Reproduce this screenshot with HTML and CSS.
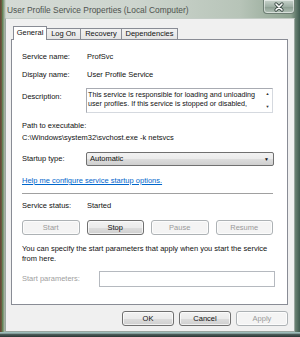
FILE: index.html
```html
<!DOCTYPE html>
<html>

<head>
    <meta name="viewport" content="width=device-width, initial-scale=1">
    <link rel="stylesheet" href="styles.css">
</head>

<body>
    <div class="window">
        <div class="titlebar">
            <span class="title">User Profile Service Properties (Local Computer)</span>
            <div class="close">
                <svg width="30" height="14" viewBox="0 0 30 14">
                    <path d="M12 4 L18 10 M18 4 L12 10" stroke="#3a4a44" stroke-width="3.2" stroke-linecap="round" />
                    <path d="M12 4 L18 10 M18 4 L12 10" stroke="#ffffff" stroke-width="1.6" stroke-linecap="round" />
                </svg>
            </div>
        </div>

        <div class="client">
            <div class="tabs">
                <div class="tab active tab-general">General</div>
                <div class="tab tab-logon">Log On</div>
                <div class="tab tab-recovery">Recovery</div>
                <div class="tab tab-deps">Dependencies</div>
            </div>

            <div class="panel">
                <div class="row row-first">
                    <span class="label">Service name:</span>
                    <span class="value">ProfSvc</span>
                </div>
                <div class="row row-display">
                    <span class="label">Display name:</span>
                    <span class="value">User Profile Service</span>
                </div>
                <div class="row row-desc">
                    <span class="label label-desc">Description:</span>
                    <div class="descbox">
                        <div class="desctext">This service is responsible for loading and unloading user profiles. If this service is stopped or disabled,</div>
                        <div class="scroll">
                            <span class="arrow">&#9650;</span>
                            <span class="arrow">&#9660;</span>
                        </div>
                    </div>
                </div>
                <div class="path-label">Path to executable:</div>
                <div class="path-value">C:\Windows\system32\svchost.exe -k netsvcs</div>
                <div class="row row-startup">
                    <span class="label">Startup type:</span>
                    <div class="select">
                        <span>Automatic</span>
                        <span class="select-arrow">&#9660;</span>
                    </div>
                </div>
                <a class="help" href="#">Help me configure service startup options.</a>
                <div class="separator"></div>
                <div class="row row-status">
                    <span class="label">Service status:</span>
                    <span class="value">Started</span>
                </div>
                <div class="actions">
                    <button class="btn" disabled>Start</button>
                    <button class="btn">Stop</button>
                    <button class="btn" disabled>Pause</button>
                    <button class="btn" disabled>Resume</button>
                </div>
                <p class="hint">You can specify the start parameters that apply when you start the service from here.</p>
                <div class="row row-params">
                    <span class="label label-params">Start parameters:</span>
                    <div class="params-input"></div>
                </div>
            </div>

            <div class="footer">
                <button class="btn btn-footer">OK</button>
                <button class="btn btn-footer">Cancel</button>
                <button class="btn btn-footer" disabled>Apply</button>
            </div>
        </div>
    </div>
</body>

</html>
```

FILE: styles.css
```css
body {
    margin: 0;
    font-family: 'Liberation Sans', Arial, sans-serif;
    font-size: 7.5px;
    color: #111;
}

.window {
    width: 300px;
    height: 337px;
    box-sizing: border-box;
    padding: 0 5px 5px 5px;
    background:
        linear-gradient(to bottom, #7fa3a0 0, #b9d6d4 1px, #50625f 2px, #2a3533 5px) bottom / 100% 5px no-repeat,
        linear-gradient(to right, #3e5a35 0, #8a3b3b 1px, #4f7a44 2px, #95a48e 4px, #d4dad5 6px, #cdd5ce 45%, #b7c4b8 80%, #8ea391 97%, #3f5a4f 100%);
}

/* Title bar */
.titlebar {
    height: 18px;
    display: flex;
    align-items: flex-start;
}

.title {
    font-size: 8.4px;
    color: #4f5450;
    margin-left: 2px;
    margin-top: 5px;
}

.close {
    margin-left: auto;
    width: 30px;
    height: 13px;
    border: 1px solid #6e7f74;
    border-top: none;
    border-radius: 0 0 4px 4px;
    background: linear-gradient(#c8d3cc, #9fb0a5 50%, #8a9c90 51%, #b2c2b7);
    box-shadow: inset 0 0 0 1px rgba(255, 255, 255, 0.5);
}

.close svg {
    display: block;
}

/* Client area */
.client {
    height: 314px;
    box-sizing: border-box;
    background-color: #f0f0f0;
    padding: 7px 6px 0 5px;
    border: 1px solid #9aa6a0;
    border-top-color: #c3ccc6;
}

.tabs {
    display: flex;
    align-items: flex-end;
    height: 13px;
    padding-left: 2px;
    position: relative;
    z-index: 1;
}

.tab {
    height: 10px;
    line-height: 10px;
    box-sizing: content-box;
    border: 1px solid #898c95;
    border-bottom: none;
    background: linear-gradient(#f2f2f2, #e4e4e4);
    text-align: center;
    margin-left: -1px;
}

.tab.active {
    height: 13px;
    line-height: 12px;
    background: #ffffff;
    margin-bottom: -1px;
    position: relative;
    z-index: 2;
    margin-left: 0;
}

.tab-general {
    width: 32px;
}

.tab-logon {
    width: 33px;
    margin-left: -1px;
}

.tab-recovery {
    width: 40px;
}

.tab-deps {
    width: 55px;
}

.panel {
    height: 266px;
    box-sizing: border-box;
    background: #ffffff;
    border: 1px solid #898c95;
    padding: 11px 14px 0 10px;
}

.row {
    display: flex;
    align-items: center;
    line-height: 12px;
}

.label {
    width: 64px;
    flex-shrink: 0;
}

.value {
    padding-left: 1px;
}

.row-display {
    margin-top: 6px;
}

.row-desc {
    margin-top: 7px;
    align-items: flex-start;
}

.label-desc {
    margin-top: 3px;
}

.descbox {
    flex: 1;
    height: 25px;
    box-sizing: border-box;
    border: 1px solid #a8abb2;
    border-right-color: #d5d9df;
    border-bottom-color: #d5d9df;
    display: flex;
}

.desctext {
    flex: 1;
    padding: 1px 0 0 1px;
    font-size: 7.2px;
    line-height: 9px;
}

.scroll {
    width: 9px;
    display: flex;
    flex-direction: column;
    justify-content: space-between;
    align-items: center;
    padding: 2px 0 3px 0;
}

.arrow {
    font-size: 4px;
    line-height: 5px;
    color: #333;
}

.path-label {
    margin-top: 7px;
    line-height: 12px;
}

.path-value {
    line-height: 12px;
}

.row-startup {
    margin-top: 8px;
}

.select {
    flex: 1;
    height: 14px;
    box-sizing: border-box;
    border: 1px solid #707070;
    border-radius: 2px;
    background: linear-gradient(#f2f2f2, #ebebeb 50%, #dddddd 51%, #cfcfcf);
    display: flex;
    align-items: center;
    padding: 0 4px 0 3px;
    margin-right: -1px;
}

.select-arrow {
    margin-left: auto;
    font-size: 5px;
    color: #111;
}

.help {
    display: block;
    margin-top: 9px;
    line-height: 12px;
    color: #0066cc;
    width: fit-content;
}

.separator {
    margin-top: 6px;
    height: 1px;
    background-color: #a0a0a0;
}

.row-status {
    margin-top: 6px;
}

.actions {
    margin-top: 8px;
    display: flex;
    gap: 7px;
}

.btn {
    font-family: inherit;
    font-size: 7.5px;
    color: #111;
    width: 58px;
    height: 15px;
    padding: 0;
    border: 1px solid #707070;
    border-radius: 3px;
    background: linear-gradient(#f2f2f2, #ebebeb 50%, #dddddd 51%, #cfcfcf);
    box-shadow: inset 0 0 0 1px rgba(255, 255, 255, 0.7);
}

.btn:disabled {
    color: #9a9a9a;
    border-color: #adb2b5;
    background: #f4f4f4;
}

.hint {
    margin: 9px 0 0 0;
    line-height: 10px;
}

.row-params {
    margin-top: 7px;
}

.label-params {
    width: 77px;
    color: #a0a0a0;
}

.params-input {
    flex: 1;
    height: 16px;
    box-sizing: border-box;
    border: 1px solid #b5b9bf;
    margin-right: -2px;
}

.footer {
    display: flex;
    justify-content: flex-end;
    gap: 5px;
    margin-top: 6px;
}

.btn-footer {
    width: 52px;
}
```
